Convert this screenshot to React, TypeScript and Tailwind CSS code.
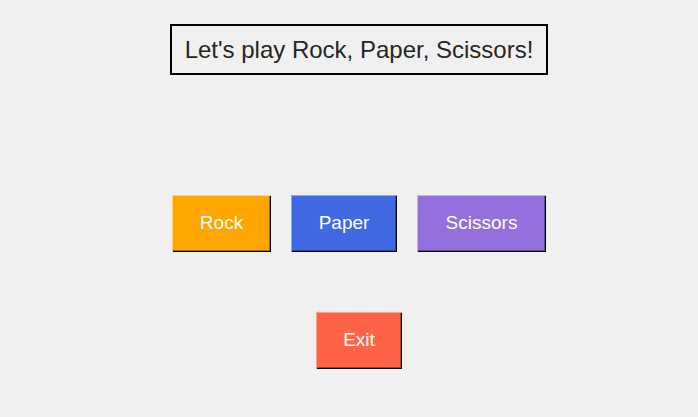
import React from 'react';

const buttons = [
  { label: 'Rock', w: 'w-[99px]', cls: 'bg-[#ffa500] shadow-[inset_1px_1px_0_#ffd27a,inset_-1px_-1px_0_#000,inset_-2px_-2px_0_#a86d00]' },
  { label: 'Paper', w: 'w-[106px]', cls: 'bg-[#4169e1] shadow-[inset_1px_1px_0_#8aa5f0,inset_-1px_-1px_0_#000,inset_-2px_-2px_0_#2a4594]' },
  { label: 'Scissors', w: 'w-[129px]', cls: 'bg-[#9370db] shadow-[inset_1px_1px_0_#c4b0ee,inset_-1px_-1px_0_#000,inset_-2px_-2px_0_#614a91]' },
];

const App = () => {
  return (
    <div className="min-h-[417px] w-full bg-[#f0f0f0] flex flex-col items-center pl-[20px] pt-[24px] font-['Liberation_Sans',Arial,sans-serif]">
      <div className="w-[378px] h-[51px] border-2 border-black flex items-center justify-center text-[24px] text-[#262626]">
        Let's play Rock, Paper, Scissors!
      </div>

      <div className="flex gap-[20px] mt-[120px]">
        {buttons.map((b) => (
          <button
            key={b.label}
            className={`${b.w} h-[57px] ${b.cls} text-white text-[19px] flex items-center justify-center`}
          >
            {b.label}
          </button>
        ))}
      </div>

      <button className="mt-[60px] w-[86px] h-[57px] bg-[#ff6347] shadow-[inset_1px_1px_0_#ffa090,inset_-1px_-1px_0_#000,inset_-2px_-2px_0_#a8402e] text-white text-[19px] flex items-center justify-center">
        Exit
      </button>
    </div>
  );
};

export default App;
